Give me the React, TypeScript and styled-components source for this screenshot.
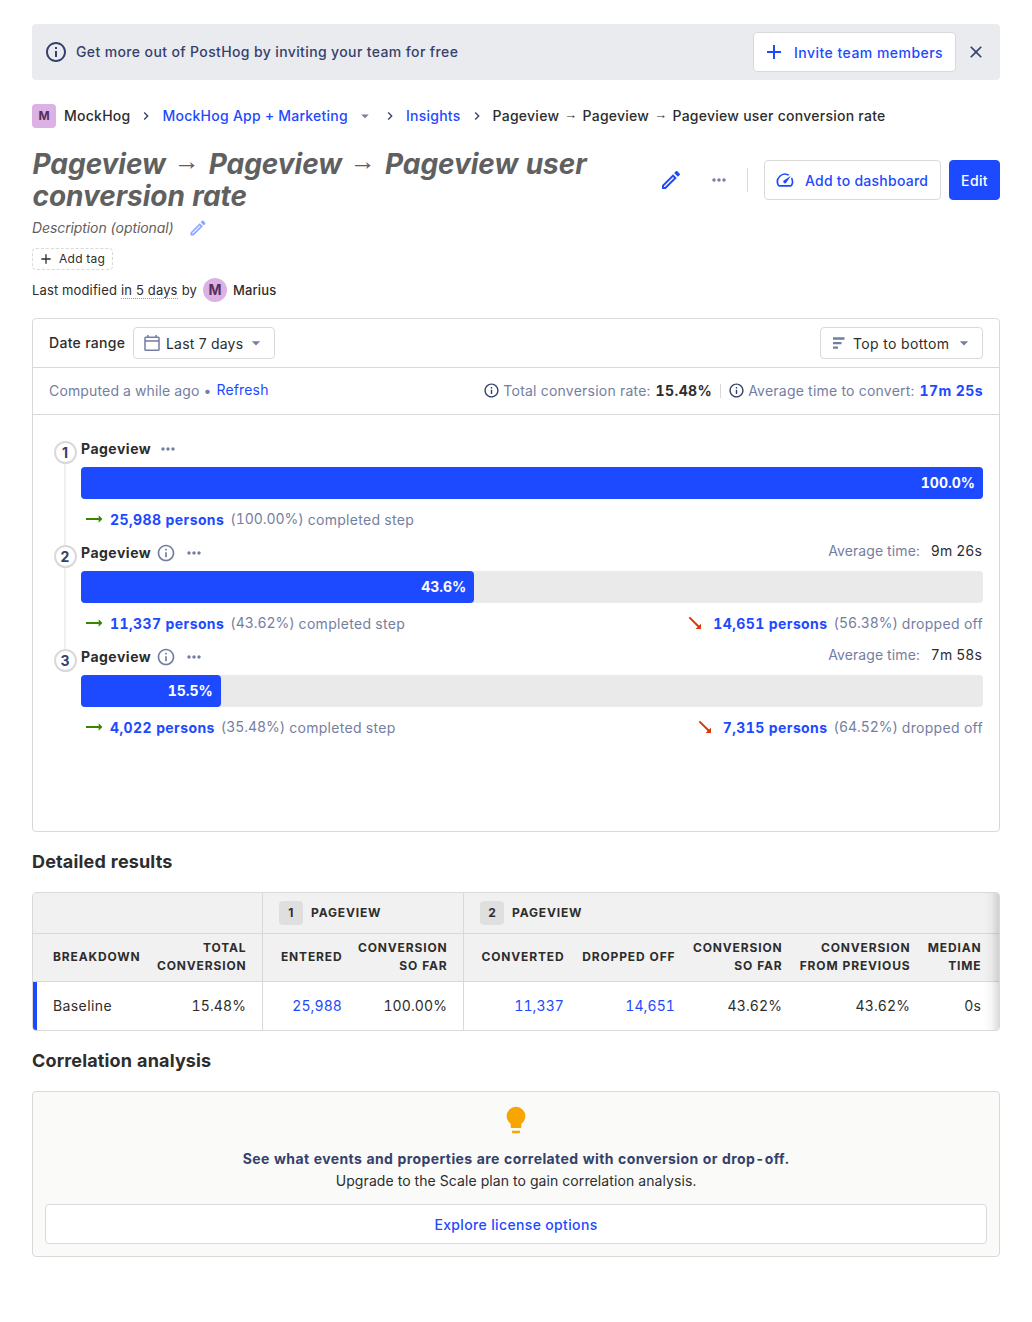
import React from 'react';
import styled, { createGlobalStyle, css } from 'styled-components';
import {
  MdAdd,
  MdArrowDropDown,
  MdChevronRight,
  MdClose,
  MdInfoOutline,
  MdMoreHoriz,
  MdOutlineEdit,
  MdSpeed,
} from 'react-icons/md';

const c = {
  primary: '#1d4aff',
  navy: '#35416b',
  muted: '#747ea1',
  text: '#2d2d2d',
  border: '#d9d9d9',
};

const GlobalStyle = createGlobalStyle`
  *, *::before, *::after { box-sizing: border-box; }
  body {
    margin: 0;
    background: #fff;
    color: ${c.text};
    font: 400 14px/22px Inter, 'Liberation Sans', sans-serif;
    font-variant-numeric: tabular-nums;
    letter-spacing: 0.15px;
    white-space: nowrap;
  }
  svg { display: block; flex: none; }
  h1, h2, p { margin: 0; }
`;

const Page = styled.main`
  padding: 24px 32px;
  height: 1322px;
  overflow: hidden;
`;

const Button = styled.button<{ $primary?: boolean; $h?: number }>`
  display: flex;
  align-items: center;
  height: ${(p) => p.$h ?? 40}px;
  padding: 2px 12px 0;
  border: 1px solid ${(p) => (p.$primary ? c.primary : c.border)};
  border-radius: 4px;
  background: ${(p) => (p.$primary ? c.primary : '#fff')};
  color: ${(p) => (p.$primary ? '#fff' : c.primary)};
  font: 500 14px/22px Inter, sans-serif;
  letter-spacing: 0.35px;
  white-space: nowrap;
  svg { position: relative; top: -1px; }
`;

const Banner = styled.div`
  display: flex;
  align-items: center;
  height: 56px;
  padding: 0 14px 0 12px;
  border-radius: 4px;
  background: #eaebef;
  color: ${c.navy};
  font-weight: 500;
  letter-spacing: 0.37px;
`;
const BannerText = styled.span`
  flex: 1;
  margin-left: 8px;
`;
const InviteButton = styled(Button)`
  width: 203px;
  padding-left: 8px;
  margin-right: 10px;
  letter-spacing: 0.47px;
  svg { margin-right: 8px; }
`;

const Breadcrumbs = styled.nav`
  display: flex;
  align-items: center;
  height: 24px;
  margin-top: 24px;
  font-weight: 500;
  letter-spacing: 0.25px;
  color: ${c.text};
`;
const Lettermark = styled.span<{ $round?: boolean }>`
  display: inline-flex;
  align-items: center;
  justify-content: center;
  width: 24px;
  height: 24px;
  border-radius: ${(p) => (p.$round ? '50%' : '4px')};
  background: #dcb1e3;
  color: #572e5e;
  font-size: ${(p) => (p.$round ? 14 : 12)}px;
  font-weight: 700;
  letter-spacing: 0;
`;
const Crumb = styled.span<{ $link?: boolean }>`
  color: ${(p) => (p.$link ? c.primary : c.text)};
`;
const Separator = styled.span`
  display: flex;
  justify-content: center;
  width: 32px;
  color: ${c.navy};
`;
const CrumbCaret = styled.span`
  margin-left: 8px;
  color: ${c.muted};
`;
const ArrowGlyph = styled.span`
  display: inline-block;
  line-height: 1;
  font-family: 'Liberation Sans', sans-serif;
  font-weight: 400;
  font-style: normal;
  transform: translateY(-0.12em) scale(0.92);
`;
const PageCrumb = styled(Crumb)`
  ${ArrowGlyph} { margin: 0 0.5px; }
`;

const TitleRow = styled.div`
  display: flex;
  align-items: center;
  height: 64px;
  margin-top: 20px;
`;
const Title = styled.h1`
  flex: 1;
  font-size: 28px;
  line-height: 32px;
  font-weight: 700;
  font-style: italic;
  letter-spacing: -0.04px;
  padding-left: 0.5px;
  color: #606060;
  white-space: nowrap;
`;
const Actions = styled.div`
  display: flex;
  align-items: center;
  gap: 8px;
  color: ${c.primary};
`;
const IconSlot = styled.span<{ $color: string; $w: number }>`
  display: flex;
  justify-content: center;
  width: ${(p) => p.$w}px;
  color: ${(p) => p.$color};
`;
const Rule = styled.span<{ $h: number }>`
  width: 1px;
  height: ${(p) => p.$h}px;
  background: ${c.border};
`;
const DashboardButton = styled(Button)`
  width: 177px;
  margin-left: 8px;
  padding-left: 10px;
  letter-spacing: 0.25px;
  svg { margin-right: 10px; }
`;
const EditButton = styled(Button)`
  width: 51px;
  padding: 2px 0 0;
  justify-content: center;
`;

const Description = styled.div`
  display: flex;
  align-items: center;
  height: 32px;
  font-style: italic;
  letter-spacing: -0.1px;
  color: #5f5f5f;
  svg { margin-left: 14px; color: #8ea4ff; }
`;
const Tag = styled.div`
  display: flex;
  align-items: center;
  gap: 5px;
  width: 81px;
  height: 22px;
  margin-top: 4px;
  padding-left: 5px;
  border: 1px dashed ${c.border};
  border-radius: 4px;
  font-size: 12px;
  letter-spacing: 0.25px;
`;
const Modified = styled.div`
  display: flex;
  align-items: center;
  height: 24px;
  margin-top: 8px;
  font-size: 13px;
  line-height: 16px;
  ${Lettermark} { margin: 0 6px; }
`;
const Ago = styled.span`
  margin: 0 4px;
  border-bottom: 1px dotted #999;
  font-variant-numeric: normal;
`;
const Strong = styled.span<{ $color?: string }>`
  font-weight: 700;
  letter-spacing: 0.4px;
  color: ${(p) => p.$color ?? 'inherit'};
`;
const Medium = styled.span`
  font-weight: 500;
`;
const Link = styled.span`
  color: ${c.primary};
`;

const Card = styled.section`
  height: 514px;
  margin-top: 16px;
  border: 1px solid ${c.border};
  border-radius: 4px;
`;
const CardRow = styled.div<{ $h: number }>`
  display: flex;
  align-items: center;
  justify-content: space-between;
  height: ${(p) => p.$h}px;
  padding: 0 16px;
  border-bottom: 1px solid ${c.border};
`;
const Inline = styled.div<{ $gap?: number }>`
  display: flex;
  align-items: center;
  gap: ${(p) => p.$gap ?? 0}px;
`;
const RangeLabel = styled.span`
  width: 76px;
  font-weight: 500;
  letter-spacing: 0.3px;
`;
const Select = styled(Button)<{ $w: number }>`
  width: ${(p) => p.$w}px;
  height: 32px;
  padding: 2px 8px 0 9px;
  color: ${c.text};
  font-weight: 400;
  font-variant-numeric: normal;
  letter-spacing: ${(p) => (p.$w > 150 ? 0.35 : 0.2)}px;
  svg { color: ${c.muted}; }
  svg:first-child { margin-right: ${(p) => (p.$w > 150 ? 3 : 5)}px; }
  svg:last-child { margin-left: auto; }
`;
const Muted = styled.span`
  color: ${c.muted};
`;
const Lifted = styled.span`
  position: relative;
  top: -1px;
`;
const Summary = styled.div`
  display: flex;
  align-items: center;
  letter-spacing: 0.23px;
  ${Lifted} { margin-right: 3px; }
  ${Strong} { margin-left: 5px; }
  ${Rule} { margin: 0 7px 0 8px; }
`;

const Steps = styled.div`
  padding: 22px 16px 0 20px;
`;
const Step = styled.div`
  display: grid;
  grid-template-columns: 24px 1fr;
  column-gap: 4px;
  height: 104px;
`;
const Rail = styled.div`
  display: flex;
  flex-direction: column;
  align-items: center;
  padding-top: 4px;
`;
const StepNumber = styled.span`
  display: flex;
  align-items: center;
  justify-content: center;
  width: 23px;
  height: 23px;
  flex: none;
  border: 2px solid #d9d9d9;
  border-radius: 50%;
  color: ${c.navy};
  font-weight: 700;
  letter-spacing: 0;
  font-variant-numeric: normal;
`;
const RailLine = styled.span`
  width: 2px;
  height: 81px;
  flex: none;
  background: #f0f0f0;
`;
const StepHead = styled.div`
  display: flex;
  align-items: center;
  height: 24px;
  > svg { margin-left: 8px; color: ${c.muted}; }
`;
const StepName = styled(Strong)<{ $tight?: boolean }>`
  letter-spacing: 0.5px;
  margin-right: ${(p) => (p.$tight ? -3 : -1)}px;
`;
const AverageTime = styled.span`
  margin-left: auto;
  padding-right: 1px;
  letter-spacing: 0.1px;
  transform: translateY(-2px);
  ${Muted} { margin-right: 11px; }
`;
const Track = styled.div`
  height: 32px;
  margin-top: 6px;
  border-radius: 4px;
  background: #eaeaea;
`;
const Fill = styled.div`
  height: 100%;
  padding: 0 8px;
  border-radius: 4px;
  background: ${c.primary};
  color: #fff;
  font-weight: 700;
  letter-spacing: 0;
  line-height: 32px;
  text-align: right;
`;
const StepFoot = styled.div`
  display: flex;
  align-items: center;
  justify-content: space-between;
  height: 24px;
  margin-top: 9px;
`;
const Metric = styled.div<{ $drop?: boolean }>`
  display: flex;
  align-items: center;
  padding-left: 3px;
  svg {
    position: relative;
    top: -1px;
    margin-right: ${(p) => (p.$drop ? 8 : 6)}px;
    color: ${(p) => (p.$drop ? '#db3707' : '#388600')};
    ${(p) => p.$drop && css`transform: rotate(45deg);`}
  }
  ${Muted} { letter-spacing: 0.3px; }
  ${Lifted} { margin: 0 4px 0 6px; letter-spacing: -0.05px; }
`;

const Heading = styled.h2`
  height: 24px;
  margin-top: 18px;
  font-size: 18px;
  line-height: 24px;
  font-weight: 700;
  letter-spacing: 0.15px;
`;

const TableBox = styled.div`
  position: relative;
  height: 139px;
  margin-top: 18px;
  border: 1px solid ${c.border};
  border-radius: 4px;
  overflow: hidden;
  &::after {
    content: '';
    position: absolute;
    inset: 0 0 0 auto;
    width: 15px;
    background: linear-gradient(to right, rgba(0, 0, 0, 0), rgba(0, 0, 0, 0.035) 50%, rgba(0, 0, 0, 0.14));
  }
`;
const TableRow = styled.div<{ $h: number; $head?: boolean }>`
  display: grid;
  grid-template-columns: 115px 114px 88px 113px 109px 111px 107px 128px 71px 90px;
  width: 1046px;
  height: ${(p) => p.$h}px;
  background: ${(p) => (p.$head ? '#f1f1f1' : '#fff')};
  border-bottom: 1px solid ${c.border};
  &:last-of-type { border-bottom: 0; }
`;
const Cell = styled.div<{ $group?: boolean; $last?: boolean; $first?: boolean; $span?: number }>`
  display: flex;
  align-items: center;
  justify-content: ${(p) => (p.$first || p.$span ? 'flex-start' : 'flex-end')};
  grid-column: span ${(p) => p.$span ?? 1};
  padding: 0 ${(p) => (p.$last ? 16 : 8)}px 0 ${(p) => (p.$first ? 20 : p.$group ? 16 : 8)}px;
  border-left: ${(p) => (p.$group ? `1px solid ${c.border}` : '0')};
  letter-spacing: ${(p) => (p.$first ? 0.4 : 0.1)}px;
`;
const LabelRow = styled(TableRow)`
  ${Cell} { padding-bottom: 2px; }
`;
const BodyRow = styled(TableRow)`
  box-shadow: inset 4px 0 0 ${c.primary};
`;
const HeadLabel = styled.span`
  font-size: 12px;
  line-height: 18px;
  font-weight: 700;
  letter-spacing: 0.85px;
  margin-right: -0.5px;
  text-align: right;
  text-transform: uppercase;
  white-space: pre;
`;
const GroupNumber = styled.span`
  width: 24px;
  height: 24px;
  margin-right: 8px;
  border-radius: 4px;
  background: #dfdfdf;
  font-size: 12px;
  font-weight: 700;
  font-variant-numeric: normal;
  line-height: 24px;
  text-align: center;
`;

const Paygate = styled.section`
  display: flex;
  flex-direction: column;
  height: 166px;
  margin-top: 18px;
  padding: 12px;
  border: 1px solid ${c.border};
  border-radius: 4px;
  background: #fafaf9;
  text-align: center;
  > svg { align-self: center; margin-bottom: 12px; }
`;
const Pitch = styled.p`
  color: ${c.navy};
  font-weight: 700;
  letter-spacing: 0.41px;
`;
const Plan = styled.p`
  letter-spacing: 0.1px;
`;
const WideButton = styled(Button)`
  justify-content: center;
  margin-top: 12px;
`;

function SortBars() {
  return (
    <svg width="20" height="20" viewBox="0 0 20 20" fill="currentColor">
      <path d="M3 4.2h11.5v2.5H3zM3 8.9h8.5v2.3H3zM3 13.5h5v2.2H3z" />
    </svg>
  );
}

function Calendar() {
  return (
    <svg width="18" height="18" viewBox="0 0 18 18" fill="none" stroke="currentColor" strokeWidth="1.5">
      <rect x="2" y="3.3" width="14" height="13" rx="0.8" />
      <path d="M2 6.9h14M4.8 1v2.3M13.2 1v2.3" />
    </svg>
  );
}

function FlowArrow() {
  return (
    <svg width="20" height="20" viewBox="0 0 20 20" fill="currentColor">
      <path d="M2 9h12.7V6.2l3.7 3.8-3.7 3.8V11H2z" />
    </svg>
  );
}

function Bulb() {
  return (
    <svg width="32" height="32" viewBox="0 0 24 24" fill="#f7a501">
      <path d="M12 2a7 7 0 0 0-7 7c0 2.38 1.19 4.47 3 5.74V17.4a.6.6 0 0 0 .6.6h6.8a.6.6 0 0 0 .6-.6v-2.66c1.81-1.27 3-3.36 3-5.74a7 7 0 0 0-7-7zM9 20v1.1c0 .5.4.9.9.9h4.2c.5 0 .9-.4.9-.9V20z" />
    </svg>
  );
}

const Arrow = () => <ArrowGlyph>→</ArrowGlyph>;

interface StepData {
  rate: number;
  persons: string;
  share: string;
  dropped?: string;
  dropShare?: string;
  time?: string;
}

const steps: StepData[] = [
  { rate: 100, persons: '25,988', share: '100.00%' },
  { rate: 43.6, persons: '11,337', share: '43.62%', dropped: '14,651', dropShare: '56.38%', time: '9m 26s' },
  { rate: 15.5, persons: '4,022', share: '35.48%', dropped: '7,315', dropShare: '64.52%', time: '7m 58s' },
];

const columns = [
  { label: 'Breakdown', value: 'Baseline', first: true },
  { label: 'Total\nconversion', value: '15.48%', last: true },
  { label: 'Entered', value: '25,988', group: true, link: true },
  { label: 'Conversion\nso far', value: '100.00%', last: true },
  { label: 'Converted', value: '11,337', group: true, link: true },
  { label: 'Dropped off', value: '14,651', link: true },
  { label: 'Conversion\nso far', value: '43.62%' },
  { label: 'Conversion\nfrom previous', value: '43.62%' },
  { label: 'Median\ntime', value: '0s' },
  { label: 'Average\ntime', value: '9m 26s', last: true },
];

function FunnelStep({ data, index }: { data: StepData; index: number }) {
  return (
    <Step>
      <Rail>
        <StepNumber>{index + 1}</StepNumber>
        {index < steps.length - 1 && <RailLine />}
      </Rail>
      <div>
        <StepHead>
          <StepName $tight={index > 0}>Pageview</StepName>
          {index > 0 && <MdInfoOutline size={20} />}
          <MdMoreHoriz size={20} />
          {data.time && (
            <AverageTime>
              <Muted>Average time:</Muted>
              {data.time}
            </AverageTime>
          )}
        </StepHead>
        <Track>
          <Fill style={{ width: `${data.rate}%` }}>{data.rate.toFixed(1)}%</Fill>
        </Track>
        <StepFoot>
          <Metric>
            <FlowArrow />
            <Strong $color={c.primary}>{data.persons} persons</Strong>
            <Muted><Lifted>({data.share})</Lifted>completed step</Muted>
          </Metric>
          {data.dropped && (
            <Metric $drop>
              <FlowArrow />
              <Strong $color={c.primary}>{data.dropped} persons</Strong>
              <Muted><Lifted>({data.dropShare})</Lifted>dropped off</Muted>
            </Metric>
          )}
        </StepFoot>
      </div>
    </Step>
  );
}

export default function App() {
  return (
    <Page>
      <GlobalStyle />
      <Banner>
        <MdInfoOutline size={24} />
        <BannerText>Get more out of PostHog by inviting your team for free</BannerText>
        <InviteButton><MdAdd size={24} />Invite team members</InviteButton>
        <MdClose size={20} />
      </Banner>

      <Breadcrumbs>
        <Inline $gap={8}>
          <Lettermark>M</Lettermark>
          <Crumb>MockHog</Crumb>
        </Inline>
        <Separator><MdChevronRight size={16} /></Separator>
        <Crumb $link>MockHog App + Marketing</Crumb>
        <CrumbCaret><MdArrowDropDown size={18} /></CrumbCaret>
        <Separator><MdChevronRight size={16} /></Separator>
        <Crumb $link>Insights</Crumb>
        <Separator><MdChevronRight size={16} /></Separator>
        <PageCrumb>Pageview <Arrow /> Pageview <Arrow /> Pageview user conversion rate</PageCrumb>
      </Breadcrumbs>

      <TitleRow>
        <Title>Pageview <Arrow /> Pageview <Arrow /> Pageview user<br />conversion rate</Title>
        <Actions>
          <IconSlot $color={c.primary} $w={40}><MdOutlineEdit size={24} /></IconSlot>
          <IconSlot $color={c.muted} $w={40}><MdMoreHoriz size={20} /></IconSlot>
          <Rule $h={24} />
          <DashboardButton><MdSpeed size={20} />Add to dashboard</DashboardButton>
          <EditButton $primary>Edit</EditButton>
        </Actions>
      </TitleRow>
      <Description>Description (optional)<MdOutlineEdit size={20} /></Description>
      <Tag><MdAdd size={16} />Add tag</Tag>
      <Modified>
        Last modified<Ago>in 5 days</Ago>by
        <Lettermark $round>M</Lettermark>
        <Medium>Marius</Medium>
      </Modified>

      <Card>
        <CardRow $h={49}>
          <Inline $gap={8}>
            <RangeLabel>Date range</RangeLabel>
            <Select $w={142}><Calendar />Last 7 days<MdArrowDropDown size={20} /></Select>
          </Inline>
          <Select $w={163}><SortBars />Top to bottom<MdArrowDropDown size={20} /></Select>
        </CardRow>
        <CardRow $h={47}>
          <Inline $gap={5}>
            <Muted>Computed a while ago •</Muted>
            <Lifted><Link>Refresh</Link></Lifted>
          </Inline>
          <Summary>
            <Lifted><MdInfoOutline size={17} color={c.navy} /></Lifted>
            <Muted>Total conversion rate:</Muted>
            <Strong>15.48%</Strong>
            <Rule $h={14} />
            <Lifted><MdInfoOutline size={17} color={c.navy} /></Lifted>
            <Muted>Average time to convert:</Muted>
            <Strong $color={c.primary}>17m 25s</Strong>
          </Summary>
        </CardRow>
        <Steps>
          {steps.map((s, i) => <FunnelStep key={s.persons} data={s} index={i} />)}
        </Steps>
      </Card>

      <Heading>Detailed results</Heading>
      <TableBox>
        <TableRow $h={41} $head>
          <Cell $span={2} />
          <Cell $span={2} $group><GroupNumber>1</GroupNumber><HeadLabel>Pageview</HeadLabel></Cell>
          <Cell $span={6} $group><GroupNumber>2</GroupNumber><HeadLabel>Pageview</HeadLabel></Cell>
        </TableRow>
        <LabelRow $h={48} $head>
          {columns.map((col, i) => (
            <Cell key={i} $first={col.first} $group={col.group} $last={col.last}><HeadLabel>{col.label}</HeadLabel></Cell>
          ))}
        </LabelRow>
        <BodyRow $h={48}>
          {columns.map((col, i) => (
            <Cell key={i} $first={col.first} $group={col.group} $last={col.last}>
              {col.link ? <Link>{col.value}</Link> : col.value}
            </Cell>
          ))}
        </BodyRow>
      </TableBox>

      <Heading>Correlation analysis</Heading>
      <Paygate>
        <Bulb />
        <Pitch>See what events and properties are correlated with conversion or drop-off.</Pitch>
        <Plan>Upgrade to the Scale plan to gain correlation analysis.</Plan>
        <WideButton>Explore license options</WideButton>
      </Paygate>
    </Page>
  );
}
